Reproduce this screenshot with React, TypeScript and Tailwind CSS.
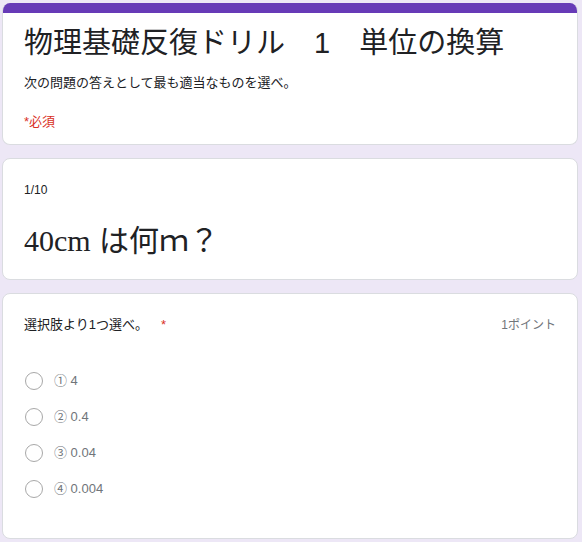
import React from "react";

const sans = "font-['Liberation_Sans','Noto_Sans_CJK_JP',sans-serif]";

const options = ["① 4", "② 0.4", "③ 0.04", "④ 0.004"];

function Card({ children, className = "" }: { children: React.ReactNode; className?: string }) {
  return (
    <div className={`w-[576px] rounded-lg border border-[#dadce0] bg-white ${className}`}>
      {children}
    </div>
  );
}

export default function App() {
  return (
    <div className={`min-h-[542px] bg-[#ede7f6] pl-[2px] pt-[3px] ${sans}`}>
      <div className="flex flex-col gap-[13px]">
        <Card className="overflow-hidden border-t-0">
          <div className="h-[10px] bg-[#673ab7]" />
          <div className="px-[21px] pb-[12px] pt-[12px]">
            <h1 className="text-[29px] leading-[36px] text-[#202124]">
              物理基礎反復ドリル　1　単位の換算
            </h1>
            <p className="mt-[12px] text-[13px] leading-[20px] text-[#202124]">
              次の問題の答えとして最も適当なものを選べ。
            </p>
            <p className="mt-[19px] text-[13px] leading-[20px] text-[#d93025]">*必須</p>
          </div>
        </Card>

        <Card className="px-[21px] pb-[18px] pt-[22px]">
          <p className="text-[12px] leading-[18px] text-[#202124]">1/10</p>
          <p className="mt-[22px] text-[30px] leading-[40px] text-[#202124]">
            <span className="font-['Liberation_Serif',serif]">40cm</span> は何ｍ？
          </p>
        </Card>

        <Card className="px-[21px] pb-[39px] pt-[21px]">
          <div className="flex items-center justify-between">
            <p className="text-[13px] leading-[20px] text-[#202124]">
              選択肢より1つ選べ。
              <span className="ml-[13px] text-[#d93025]">*</span>
            </p>
            <p className="text-[12px] leading-[20px] text-[#70757a]">1ポイント</p>
          </div>
          <div className="mt-[36px] flex flex-col gap-[16px]">
            {options.map((o) => (
              <div key={o} className="flex h-[20px] items-center">
                <span className="ml-[1px] h-[18px] w-[18px] rounded-full border-[1.5px] border-[#a8a8a8]" />
                <span className="ml-[11px] text-[13px] text-[#70757a]">{o}</span>
              </div>
            ))}
          </div>
        </Card>
      </div>
    </div>
  );
}
